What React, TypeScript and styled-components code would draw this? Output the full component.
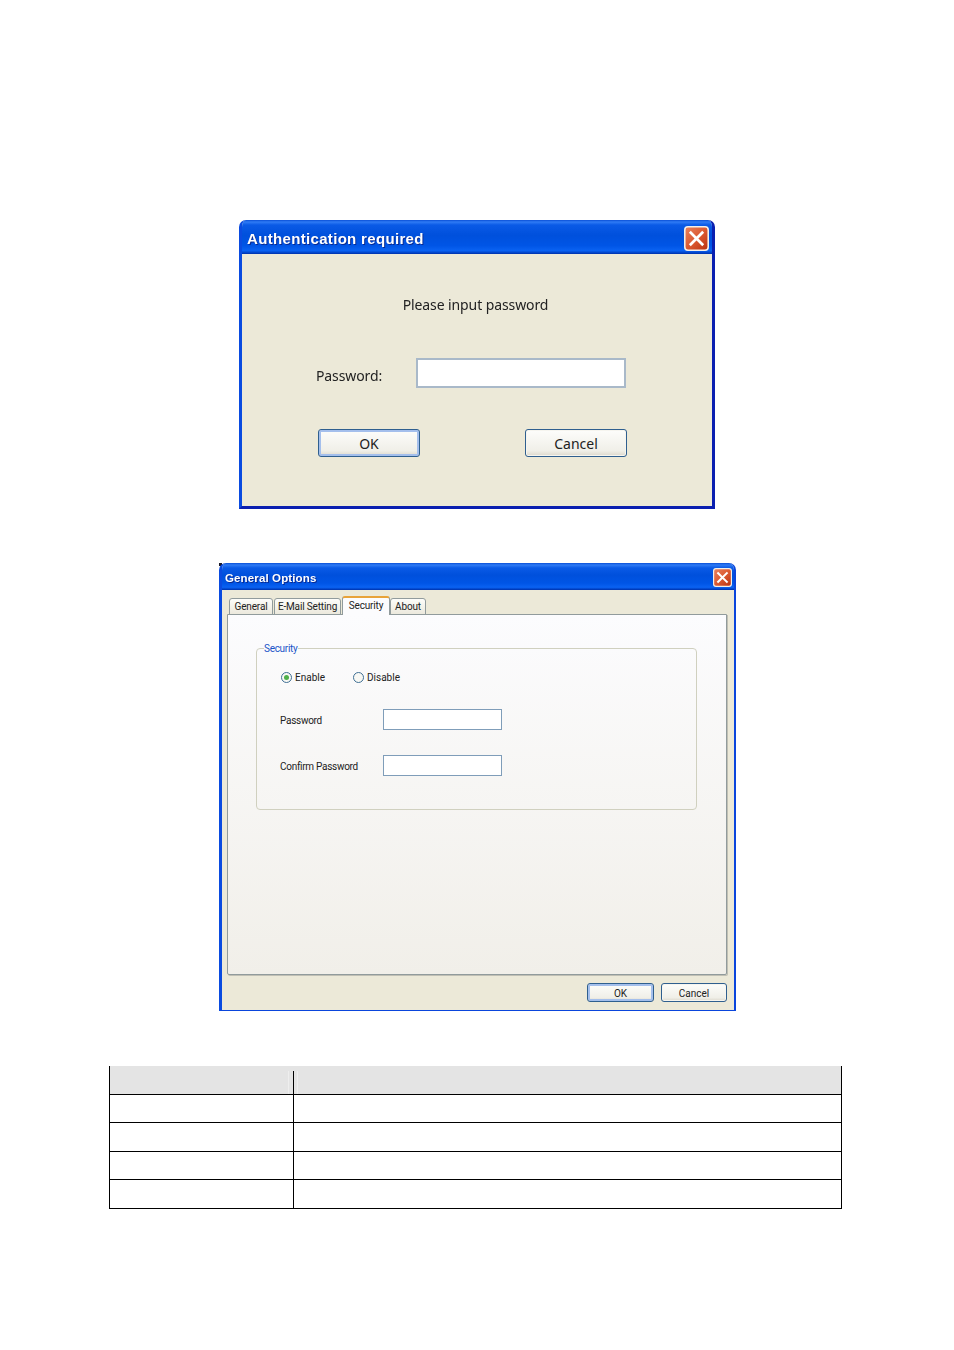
import styled, {createGlobalStyle} from "styled-components";

const GlobalStyle = createGlobalStyle`
html, body {
    margin: 0;
    padding: 0;
    background: #fff;
    font-family: "Noto Sans", "Liberation Sans", sans-serif;
}
`;

const Page = styled.div`
width: 954px;
height: 1350px;
padding-top: 220px;
box-sizing: border-box;
overflow: hidden;
`;

const OptionsFrame = styled.div`
margin-top: 54px;
position: relative;
&::before {
    content: "";
    position: absolute;
    left: 219px;
    top: 0;
    width: 3px;
    height: 3px;
    background: #1a1a2a;
}
`;

type WindowProps = {
    $width: number,
    $left: number,
    $height: number,
    $edge: string,
    $sideEdge: string,
    $right: number,
    $bottom: number,
};

const Window = styled.div<WindowProps>`
width: ${p => p.$width}px;
height: ${p => p.$height}px;
margin-left: ${p => p.$left}px;
box-sizing: border-box;
display: flex;
flex-direction: column;
background: #ece9d8;
border-radius: 7px 7px 0 0;
overflow: hidden;
position: relative;
border-left: 3px solid ${p => p.$edge};
border-right: ${p => p.$right}px solid ${p => p.$sideEdge};
border-bottom: ${p => p.$bottom}px solid ${p => p.$sideEdge};
`;

const TitleBar = styled.div<{$height: number, $size: number, $spacing: number, $padLeft: number, $padRight: number, $edge: number}>`
flex: none;
height: ${p => p.$height}px;
margin: 0 -${p => p.$edge}px 0 -3px;
padding: 2px ${p => p.$padRight}px 0 ${p => p.$padLeft}px;
box-sizing: border-box;
display: flex;
align-items: center;
justify-content: space-between;
background: linear-gradient(to bottom, #0a4fd6 0, #2f7bf5 2px, #0a5ae6 5px, #0050dc 45%, #0055e6 75%, #0a62f2 90%, #0040c4 97%, #0030a8 100%);
color: #fff;
font-family: "Liberation Sans", sans-serif;
font-weight: bold;
font-size: ${p => p.$size}px;
letter-spacing: ${p => p.$spacing}px;
text-shadow: 1px 1px 0 #0a2a90;
filter: blur(0.3px);
`;

const CloseButton = styled.svg<{$size: number}>`
flex: none;
width: ${p => p.$size}px;
height: ${p => p.$size}px;
display: block;
`;

function CloseIcon({size}: {size: number}) {
    return <CloseButton $size={size} viewBox="0 0 24 24">
        <defs>
            <linearGradient id={`close-${size}`} x1="0" y1="0" x2="1" y2="1">
                <stop offset="0" stopColor="#e8835f" />
                <stop offset="0.5" stopColor="#dc5a32" />
                <stop offset="1" stopColor="#b8300f" />
            </linearGradient>
        </defs>
        <rect x="0.75" y="0.75" width="22.5" height="22.5" rx="3" fill={`url(#close-${size})`} stroke="#f4efe9" strokeWidth="1.5" />
        <path d="M6.5 6.5 L17.5 17.5 M17.5 6.5 L6.5 17.5" stroke="#fff" strokeWidth="2.6" strokeLinecap="square" />
    </CloseButton>;
}

const AuthBody = styled.div`
flex: 1;
display: flex;
flex-direction: column;
color: #222;
font-size: 14px;
letter-spacing: -0.1px;
`;

const Message = styled.div`
height: 20px;
line-height: 20px;
margin-top: 41px;
padding-right: 3px;
text-align: center;
filter: blur(0.3px);
`;

const AuthRow = styled.div`
margin-top: 43px;
padding-left: 74px;
display: flex;
align-items: center;
`;

const AuthLabel = styled.span`
width: 100px;
padding-top: 4px;
filter: blur(0.3px);
`;

const AuthInput = styled.div`
width: 210px;
height: 30px;
box-sizing: border-box;
background: #fff;
border: 2px solid #a9b9c9;
`;

const AuthButtons = styled.div`
margin-top: 41px;
padding-left: 76px;
display: flex;
gap: 105px;
`;

const XpButton = styled.button<{$width: number, $height: number, $size: number, $font: string, $textTop: number, $primary?: boolean}>`
width: ${p => p.$width}px;
height: ${p => p.$height}px;
padding: ${p => p.$textTop}px 0 0;
box-sizing: border-box;
font-family: ${p => p.$font};
font-size: ${p => p.$size}px;
color: #222;
border: 1px solid #2f5f8f;
border-radius: 3px;
background: linear-gradient(to bottom, #fdfdfb, #f0efe8 80%, #dcd8cc);
box-shadow: ${p => p.$primary ? "inset 0 0 0 2px #a4bfec" : "inset 0 0 0 1px #f6f5ef"};
`;

const OptionsBody = styled.div`
flex: 1;
display: flex;
flex-direction: column;
padding: 7px 7px 0 5px;
font-family: Roboto, "Liberation Sans", sans-serif;
`;

const TabStrip = styled.div`
flex: none;
height: 18px;
padding-left: 2px;
display: flex;
align-items: flex-end;
position: relative;
z-index: 1;
margin-bottom: -1px;
`;

const Tab = styled.div<{$width: number, $active?: boolean}>`
width: ${p => p.$width}px;
height: ${p => p.$active ? 19 : 17}px;
margin-right: ${p => p.$active ? 0 : 1}px;
padding-top: 1px;
box-sizing: border-box;
display: flex;
justify-content: center;
align-items: ${p => p.$active ? "flex-start" : "center"};
font-size: 10px;
line-height: 14px;
letter-spacing: -0.15px;
color: #222;
white-space: nowrap;
border: 1px solid #919b9c;
border-bottom: ${p => p.$active ? "none" : "1px solid #919b9c"};
border-top: ${p => p.$active ? "2px solid #e8a33a" : "1px solid #919b9c"};
border-radius: 3px 3px 0 0;
background: ${p => p.$active ? "#fcfcfe" : "linear-gradient(to bottom, #fdfdfa, #ece9dd)"};
`;

const TabPanel = styled.div`
flex: none;
height: 361px;
box-sizing: border-box;
padding: 26px 29px 0 28px;
border: 1px solid #919b9c;
border-radius: 0 0 2px 2px;
background: linear-gradient(to bottom, #fcfcfe, #f1efe9);
box-shadow: 1px 1px 0 #c0bfb4;
`;

const GroupBox = styled.fieldset`
margin: 0;
width: 441px;
height: 169px;
box-sizing: border-box;
padding: 0 0 0 23px;
min-width: 0;
border: 1px solid #d0d0bf;
border-radius: 4px;
display: flex;
flex-direction: column;
`;

const GroupTitle = styled.legend`
margin-left: -16px;
padding: 0 1px 0 0;
position: relative;
top: 1px;
font-size: 10px;
line-height: 14px;
letter-spacing: -0.3px;
color: #1a55c8;
`;

const RadioRow = styled.div`
margin-top: 15px;
padding-left: 1px;
display: flex;
height: 14px;
align-items: center;
`;

const RadioOption = styled.label<{$width: number}>`
width: ${p => p.$width}px;
display: flex;
align-items: center;
gap: 3px;
font-size: 10px;
color: #222;
`;

const RadioDot = styled.span<{$checked?: boolean}>`
width: 11px;
height: 11px;
box-sizing: border-box;
border-radius: 50%;
border: 1px solid #3f6f94;
display: flex;
align-items: center;
justify-content: center;
background: #f8f8f4;
&::after {
    content: "";
    width: 5px;
    height: 5px;
    border-radius: 50%;
    background: ${p => p.$checked ? "#4fb04a" : "transparent"};
}
`;

const OptionRow = styled.div<{$gap: number}>`
margin-top: ${p => p.$gap}px;
display: flex;
align-items: center;
height: 21px;
`;

const OptionLabel = styled.span`
width: 103px;
font-size: 10px;
letter-spacing: -0.28px;
color: #222;
padding-top: 2px;
`;

const OptionInput = styled.div`
width: 119px;
height: 21px;
box-sizing: border-box;
background: #fff;
border: 1px solid #7f9db9;
`;

const OptionButtons = styled.div`
margin-top: 8px;
display: flex;
justify-content: flex-end;
gap: 7px;
`;

const Legend = styled.table`
margin: 55px 0 0 109px;
width: 733px;
border-collapse: collapse;
table-layout: fixed;
`;

const HeadCell = styled.th`
height: 28px;
padding: 0;
background: #e4e4e4;
border-bottom: 1px solid #000;
&:first-child {
    width: 183px;
    border-left: 1px solid #000;
}
&:last-child {
    border-right: 1px solid #000;
    position: relative;
}
&:last-child::before {
    content: "";
    position: absolute;
    left: 0;
    top: 5px;
    bottom: 0;
    width: 1px;
    background: #000;
    box-shadow: -5px 0 0 #eeeeee, 4px 0 0 #eeeeee;
}
`;

const BodyCell = styled.td<{$height: number}>`
height: ${p => p.$height}px;
padding: 0;
border: 1px solid #000;
`;

const rowHeights = [27, 28, 27, 28];
const dialogFont = `"Noto Sans", sans-serif`;
const optionsFont = `Roboto, sans-serif`;

export default function App() {
    return <Page>
        <GlobalStyle />
        <Window $width={476} $left={239} $height={289} $edge="#0a4be0" $sideEdge="#0a1fb0" $right={3} $bottom={3}>
            <TitleBar $height={34} $size={15} $spacing={0.33} $padLeft={8} $padRight={6} $edge={3}>
                <span>Authentication required</span>
                <CloseIcon size={25} />
            </TitleBar>
            <AuthBody>
                <Message>Please input password</Message>
                <AuthRow>
                    <AuthLabel>Password:</AuthLabel>
                    <AuthInput />
                </AuthRow>
                <AuthButtons>
                    <XpButton $width={102} $height={28} $size={14} $font={dialogFont} $textTop={0} $primary>OK</XpButton>
                    <XpButton $width={102} $height={28} $size={14} $font={dialogFont} $textTop={0}>Cancel</XpButton>
                </AuthButtons>
            </AuthBody>
        </Window>
        <OptionsFrame>
            <Window $width={517} $left={219} $height={448} $edge="#0a4be0" $sideEdge="#0a45dc" $right={2} $bottom={1}>
                <TitleBar $height={27} $size={11.5} $spacing={0.13} $padLeft={6} $padRight={4} $edge={2}>
                    <span>General Options</span>
                    <CloseIcon size={19} />
                </TitleBar>
                <OptionsBody>
                    <TabStrip>
                        <Tab $width={44}>General</Tab>
                        <Tab $width={67}>E-Mail Setting</Tab>
                        <Tab $width={48} $active>Security</Tab>
                        <Tab $width={36}>About</Tab>
                    </TabStrip>
                    <TabPanel>
                        <GroupBox>
                            <GroupTitle>Security</GroupTitle>
                            <RadioRow>
                                <RadioOption $width={72}><RadioDot $checked />Enable</RadioOption>
                                <RadioOption $width={60}><RadioDot />Disable</RadioOption>
                            </RadioRow>
                            <OptionRow $gap={25}>
                                <OptionLabel>Password</OptionLabel>
                                <OptionInput />
                            </OptionRow>
                            <OptionRow $gap={25}>
                                <OptionLabel>Confirm Password</OptionLabel>
                                <OptionInput />
                            </OptionRow>
                        </GroupBox>
                    </TabPanel>
                    <OptionButtons>
                        <XpButton $width={67} $height={19} $size={10} $font={optionsFont} $textTop={1} $primary>OK</XpButton>
                        <XpButton $width={66} $height={19} $size={10} $font={optionsFont} $textTop={1}>Cancel</XpButton>
                    </OptionButtons>
                </OptionsBody>
            </Window>
        </OptionsFrame>
        <Legend>
            <thead>
                <tr><HeadCell /><HeadCell /></tr>
            </thead>
            <tbody>
                {rowHeights.map((h, i) => <tr key={i}><BodyCell $height={h} /><BodyCell $height={h} /></tr>)}
            </tbody>
        </Legend>
    </Page>;
}
